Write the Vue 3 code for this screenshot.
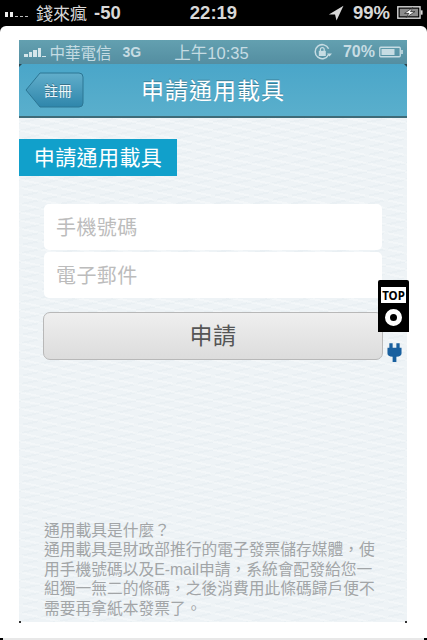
<template>
  <div class="page">
    <!-- outer phone status bar -->
    <header class="outer-status">
      <div class="outer-left">
        <span class="signal">
          <i class="dot on" /><i class="dot on" /><i class="dot" /><i class="dot" /><i class="dot" />
        </span>
        <span class="carrier">錢來瘋</span>
        <span class="db">-50</span>
      </div>
      <span class="outer-time">22:19</span>
      <div class="outer-right">
        <svg class="arrow" width="16" height="16" viewBox="0 0 15 15">
          <path d="M14.5 .8 L.8 9 L6.6 9 L8 14.6 Z" fill="#d8d8d8" />
        </svg>
        <span>99%</span>
        <svg class="outer-batt" width="28" height="13" viewBox="0 0 24 12">
          <rect x=".75" y=".75" width="20.5" height="10.5" fill="none" stroke="#d8d8d8" stroke-width="1.3" />
          <rect x="2.5" y="2.5" width="17" height="7" fill="#8c8c8c" />
          <rect x="22" y="4" width="1.6" height="4" fill="#d8d8d8" />
          <path d="M14.5 1.5 L7 6.8 L11 6.8 L8.5 10.5 L16.5 5.2 L12.5 5.2 Z" fill="#fff" stroke="#111" stroke-width=".6" />
        </svg>
      </div>
    </header>

    <div class="sheet">
      <main class="screen">
        <div class="inner-status">
          <div class="inner-left">
            <span class="bars"><i v-for="h in barHeights" :key="h" :style="{ height: h + 'px' }" /></span>
            <span class="inner-carrier">中華電信</span>
            <span class="net">3G</span>
          </div>
          <span class="inner-time">上午10:35</span>
          <div class="inner-right">
            <svg width="20" height="18" viewBox="0 0 20 18">
              <path d="M15.6 11.5 A7 7 0 1 1 15.6 5.8" fill="none" stroke="#c6dce3" stroke-width="1.5" />
              <path d="M14 10.5 L19 10.5 L16.5 13.5 Z" fill="#c6dce3" />
              <rect x="5.8" y="7.8" width="7" height="5.2" fill="#c6dce3" />
              <path d="M7.4 8 V6.6 A1.9 1.9 0 0 1 11.2 6.6 V8" fill="none" stroke="#c6dce3" stroke-width="1.2" />
            </svg>
            <span class="pct">70%</span>
            <svg width="25" height="12" viewBox="0 0 25 12">
              <rect x=".75" y="1.25" width="20.5" height="9.5" rx="1" fill="none" stroke="#c6dce3" stroke-width="1.3" />
              <rect x="2.5" y="3" width="13" height="6" fill="#c6dce3" />
              <rect x="22.2" y="4" width="1.6" height="4" fill="#c6dce3" />
            </svg>
          </div>
        </div>

        <nav class="navbar">
          <button class="back">
            <svg class="back-shape" width="59" height="36" viewBox="0 0 59 36">
              <defs>
                <linearGradient id="backFill" x1="0" y1="0" x2="0" y2="1">
                  <stop offset="0" stop-color="#62aecb" />
                  <stop offset="1" stop-color="#2f86ab" />
                </linearGradient>
              </defs>
              <path
                d="M1 18 L15 1 H54 Q58 1 58 5 V31 Q58 35 54 35 H15 Z"
                fill="url(#backFill)"
                stroke="#2c7694"
              />
            </svg>
            <span class="back-label">註冊</span>
          </button>
          <h1 class="nav-title">申請通用載具</h1>
        </nav>

        <section class="content">
          <h2 class="banner">申請通用載具</h2>

          <form class="form" @submit.prevent>
            <div class="field">手機號碼</div>
            <div class="field">電子郵件</div>
            <button class="submit">申請</button>
          </form>

          <p class="note">
            通用載具是什麼？<br />
            通用載具是財政部推行的電子發票儲存媒體，使<br />
            用手機號碼以及E-mail申請，系統會配發給您一<br />
            組獨一無二的條碼，之後消費用此條碼歸戶便不<br />
            需要再拿紙本發票了。
          </p>
        </section>
      </main>

      <!-- floating widget sits over the screen edge -->
      <div class="top-widget">
        <span class="top-label">TOP</span>
        <span class="top-wheel" />
      </div>
      <svg class="plug" width="15" height="19" viewBox="0 0 16 20">
        <path d="M2.5 0 H6 V5 H10 V0 H13.5 V5 H15.5 V11 Q15.5 14 10 14.5 V20 H6 V14.5 Q.5 14 .5 11 V5 H2.5 Z" fill="#19609f" />
      </svg>
    </div>

    <div class="bottom-strip" />
  </div>
</template>

<script setup>
const barHeights = [3, 5, 7, 9, 1]
</script>

<style>
html,
body {
  background: #000;
}
</style>

<style scoped>
.page {
  position: relative;
  width: 427px;
  height: 640px;
  display: flex;
  flex-direction: column;
  background: #000;
  overflow: hidden;
  font-family: "Liberation Sans", "Noto Sans CJK TC", sans-serif;
}

.outer-status {
  height: 26px;
  box-sizing: border-box;
  flex-shrink: 0;
  display: grid;
  grid-template-columns: 1fr auto 1fr;
  align-items: center;
  padding: 0 3px 1px 5px;
  color: #d8d8d8;
  font-size: 18.5px;
}

.outer-left,
.outer-right {
  display: flex;
  align-items: center;
}

.outer-right {
  justify-content: flex-end;
  gap: 6px;
}

.outer-right .arrow {
  margin-right: 3px;
}

.outer-time {
  margin-right: 2px;
  font-weight: 700;
}

.signal {
  display: flex;
  align-items: flex-end;
  gap: 2px;
  margin-right: 8px;
  margin-top: 4px;
}

.dot {
  width: 3px;
  height: 1px;
  background: #bbb;
}

.dot.on {
  height: 5px;
  background: #eee;
}

.carrier {
  font-size: 17px;
  margin-right: 7px;
}

.db {
  font-weight: 700;
}

.outer-right span {
  font-weight: 700;
}

.sheet {
  position: relative;
  flex: 1;
  min-height: 0;
  background: #fff;
  border-radius: 6px 6px 0 0;
  padding: 14px 20px 18px 19px;
  display: flex;
}

.screen {
  position: relative;
  flex: 1;
  min-width: 0;
  display: flex;
  flex-direction: column;
  background-color: #eef3f6;
}

/* tiny black corners left on the captured screen */
.screen::before,
.screen::after {
  content: "";
  position: absolute;
  bottom: -1px;
  width: 2px;
  height: 2px;
  background: #333;
}

.screen::before {
  left: 0;
}

.screen::after {
  right: 0;
}

.inner-status {
  height: 24px;
  flex-shrink: 0;
  display: grid;
  grid-template-columns: 1fr auto 1fr;
  align-items: center;
  padding: 0 3px 0 5px;
  background: linear-gradient(#63a0b0, #548ea1);
  color: #c6dce3;
  font-size: 16.5px;
}

.inner-left,
.inner-right {
  display: flex;
  align-items: center;
}

.inner-right {
  justify-content: flex-end;
  gap: 4px;
  font-size: 16px;
}

.bars {
  display: flex;
  align-items: flex-end;
  gap: 1px;
  margin-right: 4px;
  margin-top: 1px;
}

.bars i {
  width: 3.5px;
  background: #d5e5ea;
}

.inner-carrier {
  font-size: 15.5px;
  margin-right: 11px;
}

.net {
  font-size: 14px;
  font-weight: 700;
}

.inner-time {
  margin-left: -5px;
}

.pct {
  font-weight: 700;
  margin-left: 6px;
}

.navbar {
  position: relative;
  height: 54px;
  box-sizing: border-box;
  flex-shrink: 0;
  display: flex;
  align-items: center;
  justify-content: center;
  background: linear-gradient(#4aa6c9, #5aafcc);
  border-bottom: 2px solid #3e6b78;
}

.navbar::before,
.navbar::after {
  content: "";
  position: absolute;
  top: 0;
  width: 0;
  height: 0;
  border-top: 3px solid #2b4650;
}

.navbar::before {
  left: 0;
  border-right: 3px solid transparent;
}

.navbar::after {
  right: 0;
  border-left: 3px solid transparent;
}

.back {
  position: absolute;
  left: 6px;
  top: 8px;
  width: 59px;
  height: 36px;
  padding: 0;
  background: none;
  border: none;
  font-family: inherit;
}

.back-shape {
  position: absolute;
  left: 0;
  top: 0;
}

.back-label {
  position: relative;
  display: block;
  padding-left: 7px;
  color: #f0f8fb;
  font-size: 14px;
  text-shadow: 0 -1px 0 rgba(0, 0, 0, 0.3);
}

.nav-title {
  margin: 0 0 2px;
  color: #fff;
  font-size: 23px;
  font-weight: 400;
  letter-spacing: 1px;
  text-shadow: 0 -1px 0 rgba(0, 0, 0, 0.25);
}

.content {
  flex: 1;
  min-height: 0;
  display: flex;
  flex-direction: column;
  background-color: #eef3f6;
  background-image:
    repeating-linear-gradient(12deg, rgba(255, 255, 255, 0.3) 0 2px, transparent 2px 8px),
    repeating-linear-gradient(-12deg, rgba(215, 226, 232, 0.2) 0 2px, transparent 2px 8px);
  padding-top: 21px;
}

.banner {
  width: 158px;
  height: 37px;
  box-sizing: border-box;
  margin: 0;
  padding-bottom: 3px;
  display: flex;
  align-items: center;
  justify-content: center;
  background: #11a0cb;
  color: #fff;
  font-size: 21px;
  font-weight: 400;
  letter-spacing: 0.4px;
}

.form {
  display: flex;
  flex-direction: column;
  gap: 2px;
  padding: 28px 25px 0;
}

.field {
  height: 46px;
  box-sizing: border-box;
  display: flex;
  align-items: center;
  padding: 0 0 2px 12px;
  background: #fff;
  border-radius: 5px;
  color: #bcbcbc;
  font-size: 20px;
  letter-spacing: 0.4px;
}

.submit {
  height: 48px;
  margin: 12px -1px 0;
  padding: 0 0 4px;
  background: linear-gradient(#efefef, #dcdcdc);
  border: 1px solid #b8b8b8;
  border-radius: 7px;
  color: #555;
  font-family: inherit;
  font-size: 23px;
  letter-spacing: 0.5px;
}

.note {
  margin: auto 0 0;
  padding: 0 0 4px 25px;
  color: #a2a5a7;
  font-size: 15.75px;
  line-height: 19.5px;
  white-space: nowrap;
}

.top-widget {
  position: absolute;
  left: 378px;
  top: 254px;
  width: 31px;
  height: 52px;
  display: flex;
  flex-direction: column;
  align-items: center;
  padding-top: 7px;
  box-sizing: border-box;
  background: #000;
  border-radius: 2px 2px 0 0;
}

.top-label {
  width: 25px;
  height: 16px;
  display: flex;
  align-items: center;
  justify-content: center;
  background: #fff;
  color: #000;
  font-family: "Noto Sans", sans-serif;
  font-size: 11.5px;
  font-weight: 700;
}

.top-wheel {
  width: 7px;
  height: 7px;
  margin-top: 6px;
  border: 5px solid #fff;
  border-radius: 50%;
  background: #000;
}

.plug {
  position: absolute;
  left: 387px;
  top: 317px;
}

.bottom-strip {
  position: absolute;
  left: 0;
  right: 0;
  bottom: 0;
  height: 2px;
  box-sizing: border-box;
  background: #e8e8e8;
  border-left: 3px solid #000;
  border-right: 3px solid #000;
}
</style>
